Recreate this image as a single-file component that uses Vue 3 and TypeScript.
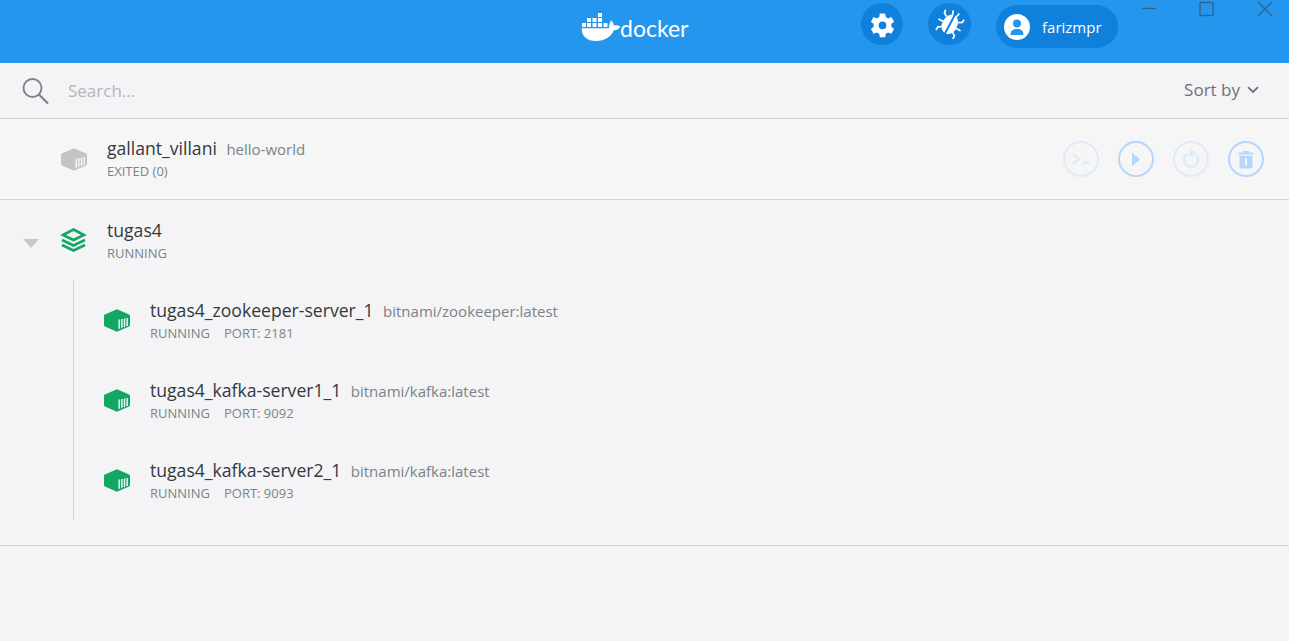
<script setup lang="ts">
interface Service {
  name: string
  image: string
  port: number
}

const services: Service[] = [
  { name: 'tugas4_zookeeper-server_1', image: 'bitnami/zookeeper:latest', port: 2181 },
  { name: 'tugas4_kafka-server1_1', image: 'bitnami/kafka:latest', port: 9092 },
  { name: 'tugas4_kafka-server2_1', image: 'bitnami/kafka:latest', port: 9093 },
]

const hexPath = 'M13.2 0 L25.6 5.4 Q26.5 5.8 26.5 6.8 L26.5 16.2 Q26.5 17.2 25.6 17.6 L13.2 23 L0.9 17.6 Q0 17.2 0 16.2 L0 6.8 Q0 5.8 0.9 5.4 Z'
const slats = 'M15.5 10.500v9.500M18.200 10v9M20.900 9.500v8.500M23.600 9v8'
</script>

<template>
  <div class="app">
    <header class="topbar">
      <div class="logo">
        <svg class="whale" width="41" height="28" viewBox="0 0 41 28">
          <g fill="#fff">
            <rect x="17" y="0" width="4" height="4" />
            <rect x="6" y="5" width="4" height="4" />
            <rect x="11.500" y="5" width="4" height="4" />
            <rect x="17" y="5" width="4" height="4" />
            <rect x="1" y="10" width="4" height="4" />
            <rect x="6" y="10" width="4" height="4" />
            <rect x="11.500" y="10" width="4" height="4" />
            <rect x="17" y="10" width="4" height="4" />
            <rect x="22.500" y="10" width="4" height="4" />
            <path d="M0.800 15.200 H28 C28 12 28.500 9.500 30.200 7.500 C32 9 32.800 11 32.700 12.600 C34.500 11.800 37 12 39.500 13.500 C37.800 16.500 35.300 17.500 32.800 17.300 C30 24 24 28 15 28 C6 28 0.200 23 0.800 15.200 Z" />
          </g>
        </svg>
        <span class="wordmark">docker</span>
      </div>
      <button class="round-btn">
        <svg width="27" height="27" viewBox="-0.4 -0.8 24 24" fill="#fff">
          <path d="M19.400 13.200c.1-.4.1-.8.1-1.200s0-.8-.1-1.200l2.500-2-2.400-4.200-3 1.200c-.6-.5-1.300-.9-2-1.200L14 1.400H9.200l-.5 3.200c-.7.3-1.400.7-2 1.200l-3-1.200-2.400 4.200 2.500 2c-.1.4-.1.8-.1 1.200s0 .8.1 1.200l-2.500 2 2.400 4.200 3-1.200c.6.5 1.300.9 2 1.200l.5 3.200H14l.5-3.200c.7-.3 1.400-.7 2-1.200l3 1.200 2.400-4.200zM11.600 15.400a3.400 3.400 0 1 1 0-6.800 3.400 3.400 0 0 1 0 6.800z" />
        </svg>
      </button>
      <button class="round-btn bug">
        <svg width="30" height="30" viewBox="0 0 30 30">
          <g transform="rotate(28 15 15)">
            <g fill="#fff">
              <path d="M14 5.500 C9.500 6 7.500 11 7.500 16 C7.500 21 10 24.500 14 25.500 Z" />
              <path d="M16 5.500 C20.500 6 22.500 11 22.500 16 C22.500 21 20 24.500 16 25.500 Z" />
            </g>
            <g fill="none" stroke="#fff" stroke-width="1.700">
              <path d="M13 6 L11.500 1.500 M17 6 L18.500 1.500" />
              <path d="M8.500 10 L5 8 L4.500 4.500 M7.500 16 H2.500 M9 21 L5.500 23.500 L5.500 27" />
              <path d="M21.500 10 L25 8 L25.500 4.500 M22.500 16 H27.500 M21 21 L24.500 23.500 L24.500 27" />
            </g>
          </g>
        </svg>
      </button>
      <div class="user-pill">
        <span class="avatar">
          <svg width="18" height="18" viewBox="0 0 18 18" fill="#2496ed">
            <circle cx="9" cy="5.500" r="4" />
            <path d="M2.500 17 C2.500 12.500 5 11 9 11 C13 11 15.500 12.500 15.500 17 Z" />
          </svg>
        </span>
        <span class="user-name">farizmpr</span>
      </div>
      <div class="win-controls">
        <svg width="16" height="16" viewBox="0 0 16 16"><path d="M1 7.500 H15" stroke="#35618a" stroke-width="1.300" /></svg>
        <svg width="16" height="16" viewBox="0 0 16 16"><rect x="1" y="1.500" width="13" height="13" fill="none" stroke="#35618a" stroke-width="1.300" /></svg>
        <svg width="16" height="16" viewBox="0 0 16 16"><path d="M1 1 L15 15 M15 1 L1 15" stroke="#35618a" stroke-width="1.200" /></svg>
      </div>
    </header>

    <div class="search-bar">
      <svg width="28" height="28" viewBox="0 0 28 28" fill="none" stroke="#7d8388" stroke-width="1.900">
        <circle cx="10.500" cy="11" r="9" />
        <path d="M17 17.500 L26 26.500" stroke-width="2.200" />
      </svg>
      <span class="search-placeholder">Search...</span>
      <span class="sort">Sort by
        <svg width="12" height="8" viewBox="0 0 12 8" fill="none" stroke="#6c7176" stroke-width="1.800"><path d="M1 1.200 L6 6 L11 1.200" /></svg>
      </span>
    </div>

    <section class="row-exited">
      <svg class="box-icon" width="26" height="23" viewBox="0 0 26.500 23">
        <path :d="hexPath" fill="#c4c4c4" />
        <path :d="slats" stroke="#f6f6f6" stroke-width="1.500" />
      </svg>
      <div class="info">
        <div class="title-line"><span class="name">gallant_villani</span><span class="image">hello-world</span></div>
        <div class="meta">EXITED (0)</div>
      </div>
      <div class="actions">
        <span class="action faint">
          <svg width="18" height="12" viewBox="0 0 18 12" fill="none" stroke="#deebf8" stroke-width="2.400"><path d="M1 1.500 L7 6 L1 10.500" /><path d="M10.500 9.500 H17.500" /></svg>
        </span>
        <span class="action">
          <svg width="10" height="15" viewBox="0 0 10 15" fill="#b5d7fb"><path d="M1 0.500 L9 7.500 L1 14.500 Z" /></svg>
        </span>
        <span class="action faint">
          <svg width="20" height="20" viewBox="0 0 20 20" fill="none" stroke="#deebf8" stroke-width="2.800"><path d="M6 5 A7 7 0 1 0 15.500 6.500" /><path d="M8.500 0 L16 3.800 L8.500 8.500 Z" fill="#deebf8" stroke="none" /></svg>
        </span>
        <span class="action">
          <svg width="16" height="19" viewBox="0 0 16 19" fill="#b5d7fb"><path d="M0.500 2.500 H5 V1 H11 V2.500 H15.500 V4.500 H0.500 Z" /><path d="M1.500 5.800 H14.500 V17 Q14.500 18.500 13 18.500 H3 Q1.500 18.500 1.500 17 Z M7 8 V15.500 H9 V8 Z" fill-rule="evenodd" /></svg>
        </span>
      </div>
    </section>

    <section class="group">
      <div class="group-head">
        <span class="caret"></span>
        <svg class="stack-icon" width="27" height="24" viewBox="0 0 27 24" fill="none" stroke="#12a764" stroke-width="2.600">
          <path d="M13.500 1.500 L24 7 L13.500 12 L3 7 Z" />
          <path d="M2 12 L13.500 17.500 L25 12" />
          <path d="M2 17 L13.500 22.500 L25 17" />
        </svg>
        <div class="info">
          <div class="title-line"><span class="name">tugas4</span></div>
          <div class="meta">RUNNING</div>
        </div>
      </div>
      <div class="services">
        <div v-for="s in services" :key="s.name" class="service">
          <svg class="box-icon" width="26" height="23" viewBox="0 0 26.500 23">
            <path :d="hexPath" fill="#12a764" />
            <path :d="slats" stroke="#f4f4f6" stroke-width="1.500" />
          </svg>
          <div class="info">
            <div class="title-line"><span class="name">{{ s.name }}</span><span class="image">{{ s.image }}</span></div>
            <div class="meta"><span>RUNNING</span><span>PORT: {{ s.port }}</span></div>
          </div>
        </div>
      </div>
    </section>
  </div>
</template>

<style>
html, body {
  margin: 0;
  background: #f4f4f6;
}
</style>

<style scoped>
.app {
  height: 641px;
  overflow: hidden;
  background: #f4f4f6;
  font-family: "Open Sans", "Liberation Sans", sans-serif;
  color: #33383d;
}

.topbar {
  height: 63px;
  box-sizing: border-box;
  background: #2496ed;
  display: flex;
  align-items: flex-start;
  padding-left: 581px;
}

.logo {
  display: flex;
  align-items: center;
  width: 107px;
  height: 30px;
  margin-top: 12px;
  margin-right: 173px;
}

.whale {
  flex: none;
}

.wordmark {
  font-family: Lato, "Open Sans", sans-serif;
  font-size: 23px;
  font-weight: 400;
  color: #fff;
  margin-left: -2px;
  padding-top: 1px;
}

.round-btn {
  width: 42px;
  height: 42px;
  margin-top: 3px;
  margin-right: 25px;
  padding: 0;
  border: none;
  border-radius: 50%;
  background: #0f80db;
  display: flex;
  align-items: center;
  justify-content: center;
}

.round-btn.bug {
  width: 43px;
}

.user-pill {
  width: 122px;
  height: 43px;
  margin-top: 5px;
  box-sizing: border-box;
  border-radius: 22px;
  background: #0f80db;
  display: flex;
  align-items: center;
  padding-left: 8px;
}

.avatar {
  width: 26px;
  height: 26px;
  border-radius: 50%;
  background: #fff;
  display: flex;
  align-items: center;
  justify-content: center;
}

.user-name {
  margin-left: 12px;
  font-size: 15px;
  color: #fff;
}

.win-controls {
  margin-left: 23px;
  display: flex;
  gap: 42px;
  margin-top: 1px;
}

.search-bar {
  height: 56px;
  box-sizing: border-box;
  border-bottom: 1px solid #d2d3d4;
  display: flex;
  align-items: center;
  padding: 0 30px 0 22px;
}

.search-placeholder {
  margin-left: 18px;
  font-size: 17px;
  color: #b3b6b8;
  flex: 1;
}

.sort {
  font-size: 17px;
  color: #6c7176;
  display: flex;
  align-items: center;
  gap: 7px;
  margin-top: -2px;
}

.row-exited {
  height: 81px;
  box-sizing: border-box;
  border-bottom: 1px solid #d2d3d4;
  background: #f6f6f6;
  display: flex;
  align-items: center;
  padding: 0 25px 0 61px;
}

.info {
  margin-left: 20px;
}

.row-exited .info {
  flex: 1;
  margin-top: -1px;
}

.title-line {
  display: flex;
  align-items: baseline;
  gap: 9.500px;
  line-height: 24px;
}

.name {
  font-size: 17.600px;
  color: #33383d;
}

.image {
  font-size: 15px;
  color: #7d8287;
}

.meta {
  display: flex;
  gap: 14px;
  font-size: 13px;
  line-height: 19px;
  color: #7d8287;
  margin-top: 1px;
}

.group-head .meta {
  margin-top: 2px;
}

.actions {
  display: flex;
  gap: 19px;
}

.action {
  width: 36px;
  height: 36px;
  box-sizing: border-box;
  border: 2px solid #b5d7fb;
  border-radius: 50%;
  display: flex;
  align-items: center;
  justify-content: center;
}

.action.faint {
  border-color: #deebf8;
}

.group {
  height: 346px;
  box-sizing: border-box;
  border-bottom: 1px solid #d2d3d4;
}

.group-head {
  height: 80px;
  box-sizing: border-box;
  display: flex;
  align-items: center;
  padding-left: 23px;
}

.caret {
  width: 0;
  height: 0;
  margin-top: 7px;
  border-left: 8px solid transparent;
  border-right: 8px solid transparent;
  border-top: 9px solid #c8c8c8;
}

.stack-icon {
  margin-left: 21px;
  flex: none;
}

.services {
  margin-left: 73px;
  border-left: 1px solid #d2d3d4;
  height: 240px;
  padding-left: 30px;
}

.service {
  height: 80px;
  display: flex;
  align-items: center;
}
</style>
